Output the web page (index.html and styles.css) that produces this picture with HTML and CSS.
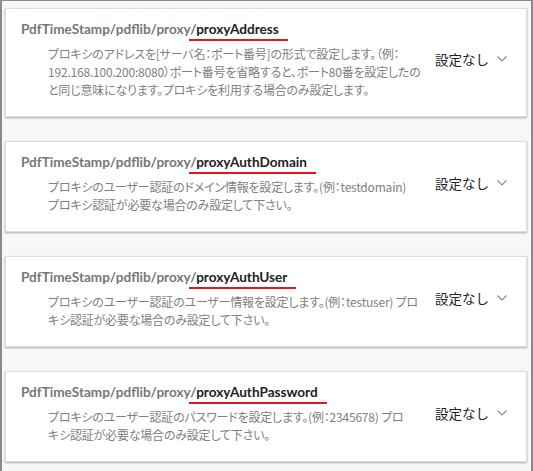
FILE: index.html
```html
<!DOCTYPE html>
<html lang="ja">
<head>
  <meta charset="UTF-8">
  <title>proxy settings</title>
  <link rel="stylesheet" href="styles.css">
</head>
<body>
  <div class="list">
    <div class="setting">
      <div class="main">
        <div class="name">PdfTimeStamp/pdflib/proxy/<span class="key">proxyAddress</span></div>
        <p class="desc">プロキシのアドレスを[サーバ名：ポート番号]の形式で設定します。（例：<br>192.168.100.200:8080）ポート番号を省略すると、ポート80番を設定したの<br>と同じ意味になります。プロキシを利用する場合のみ設定します。</p>
      </div>
      <div class="value">設定なし
        <svg class="chev" width="10" height="6" viewBox="0 0 10 6"><path d="M0.5 0.5 L5 5 L9.5 0.5" fill="none" stroke="#8a8a8a" stroke-width="1.2"/></svg>
      </div>
    </div>
    <div class="setting">
      <div class="main">
        <div class="name">PdfTimeStamp/pdflib/proxy/<span class="key">proxyAuthDomain</span></div>
        <p class="desc">プロキシのユーザー認証のドメイン情報を設定します。(例：testdomain)<br>プロキシ認証が必要な場合のみ設定して下さい。</p>
      </div>
      <div class="value">設定なし
        <svg class="chev" width="10" height="6" viewBox="0 0 10 6"><path d="M0.5 0.5 L5 5 L9.5 0.5" fill="none" stroke="#8a8a8a" stroke-width="1.2"/></svg>
      </div>
    </div>
    <div class="setting">
      <div class="main">
        <div class="name">PdfTimeStamp/pdflib/proxy/<span class="key">proxyAuthUser</span></div>
        <p class="desc">プロキシのユーザー認証のユーザー情報を設定します。(例：testuser) プロ<br>キシ認証が必要な場合のみ設定して下さい。</p>
      </div>
      <div class="value">設定なし
        <svg class="chev" width="10" height="6" viewBox="0 0 10 6"><path d="M0.5 0.5 L5 5 L9.5 0.5" fill="none" stroke="#8a8a8a" stroke-width="1.2"/></svg>
      </div>
    </div>
    <div class="setting">
      <div class="main">
        <div class="name">PdfTimeStamp/pdflib/proxy/<span class="key">proxyAuthPassword</span></div>
        <p class="desc">プロキシのユーザー認証のパスワードを設定します。(例：2345678) プロ<br>キシ認証が必要な場合のみ設定して下さい。</p>
      </div>
      <div class="value">設定なし
        <svg class="chev" width="10" height="6" viewBox="0 0 10 6"><path d="M0.5 0.5 L5 5 L9.5 0.5" fill="none" stroke="#8a8a8a" stroke-width="1.2"/></svg>
      </div>
    </div>
  </div>
</body>
</html>
```

FILE: styles.css
```css
html, body { height: 100%; }
body { margin: 0; background: #f7f7f7; font-family: "Noto Sans CJK JP", sans-serif; box-sizing: border-box; border: 2px solid #8a8a8a; border-top-width: 1px; border-bottom: none; padding: 7px 4px 0 3px; }
.list { display: flex; flex-direction: column; gap: 24px; }
.setting { display: flex; align-items: center; background: #fff; border: 1px solid #dcdcdc; box-shadow: 0 1px 2px rgba(0, 0, 0, 0.3); padding: 10px 19px 17px 15px; }
.main { flex: none; width: 392px; }
.name { font-family: Lato, "Noto Sans", sans-serif; font-size: 13.6px; font-weight: bold; line-height: 20px; color: #777; }
.key { position: relative; color: #222; }
.key::after { content: ""; position: absolute; left: -7px; right: -9px; bottom: -4px; height: 2px; background: #e8141c; }
.desc { margin: 6px 0 0 27px; font-size: 12px; line-height: 18px; letter-spacing: -0.2px; color: #808080; white-space: nowrap; font-feature-settings: "palt"; }
.value { margin-left: 22px; display: flex; align-items: center; white-space: nowrap; font-size: 13.5px; color: #222; }
.chev { margin-left: 8px; flex: none; }
```
